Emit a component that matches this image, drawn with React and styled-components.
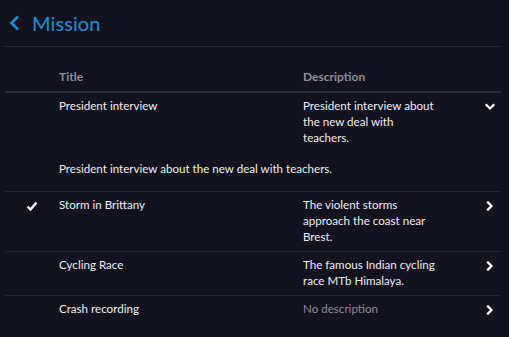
import React, { useState } from 'react';
import styled, { createGlobalStyle } from 'styled-components';

const StyleGlobal = createGlobalStyle`
  html, body {
    margin: 0;
    padding: 0;
    background: #13131f;
  }
  body {
    font-family: Lato, "Open Sans", sans-serif;
    color: #ededf0;
  }
`;

// Page principale
const Page = styled.div`
  width: 509px;
  height: 337px;
  padding: 0 8px 0 5px;
  box-sizing: border-box;
  background: #13131f;
  overflow: hidden;
`;

const EnTete = styled.div`
  display: flex;
  align-items: center;
  gap: 11px;
  height: 47px;
  padding-left: 3px;
  border-bottom: 1px solid #2a2a36;
  box-sizing: border-box;
`;

const Titre = styled.h1`
  margin: 0;
  font-size: 20px;
  font-weight: 400;
  color: #1b8fd8;
  letter-spacing: 0.1px;
`;

const Ligne = styled.div`
  display: grid;
  grid-template-columns: 54px 244px 135px 1fr;
  align-items: start;
  padding: ${(p) => (p.$entete ? '22px 0 6px' : '5px 0 6px')};
  border-bottom: ${(p) => (p.$entete ? '2px solid #2e2e3a' : p.$sans ? 'none' : '1px solid #262633')};
  font-size: 11.6px;
  line-height: 16px;
`;

const Cellule = styled.div`
  color: ${(p) => (p.$gris ? '#8c8c97' : '#ededf0')};
`;

const CelluleEntete = styled.div`
  color: #8e8e9b;
  font-weight: 700;
  font-size: 12px;
`;

const CelluleIcone = styled.div`
  display: flex;
  justify-content: ${(p) => (p.$droite ? 'flex-end' : 'center')};
  padding-right: ${(p) => (p.$droite ? '6px' : '0')};
  padding-top: 4px;
`;

const Detail = styled.div`
  grid-column: 2 / 5;
  margin-top: 15px;
  margin-bottom: 8px;
`;

const Fleche = ({ bas }) => (
  <svg width="10" height="10" viewBox="0 0 10 10">
    <path
      d={bas ? 'M1.5 3 L5 6.5 L8.5 3' : 'M3 1.5 L6.5 5 L3 8.5'}
      fill="none"
      stroke="#fff"
      strokeWidth="2.2"
      strokeLinecap="square"
    />
  </svg>
);

const Coche = () => (
  <svg width="12" height="10" viewBox="0 0 12 10">
    <path d="M1.5 5.5 L4.5 8.5 L10.5 1.5" fill="none" stroke="#fff" strokeWidth="2.4" />
  </svg>
);

const missions = [
  {
    titre: 'President interview',
    description: 'President interview about the new deal with teachers.',
  },
  {
    titre: 'Storm in Brittany',
    description: 'The violent storms approach the coast near Brest.',
    coche: true,
  },
  {
    titre: 'Cycling Race',
    description: 'The famous Indian cycling race MTb Himalaya.',
  },
  { titre: 'Crash recording', description: '' },
];

const App = () => {
  const [ouvert] = useState(0);

  return (
    <Page>
      <StyleGlobal />
      <EnTete>
        <svg width="13" height="16" viewBox="0 0 13 16">
          <path d="M10 1.5 L3.5 8 L10 14.5" fill="none" stroke="#1b8fd8" strokeWidth="2.6" />
        </svg>
        <Titre>Mission</Titre>
      </EnTete>

      <Ligne $entete>
        <div />
        <CelluleEntete>Title</CelluleEntete>
        <CelluleEntete>Description</CelluleEntete>
        <div />
      </Ligne>

      {missions.map((m, i) => (
        <Ligne key={m.titre} $sans={i === missions.length - 1}>
          <CelluleIcone>{m.coche && <Coche />}</CelluleIcone>
          <Cellule>{m.titre}</Cellule>
          <Cellule $gris={!m.description}>{m.description || 'No description'}</Cellule>
          <CelluleIcone $droite>
            <Fleche bas={i === ouvert} />
          </CelluleIcone>
          {i === ouvert && <Detail>{m.description}</Detail>}
        </Ligne>
      ))}
    </Page>
  );
};

export default App;
